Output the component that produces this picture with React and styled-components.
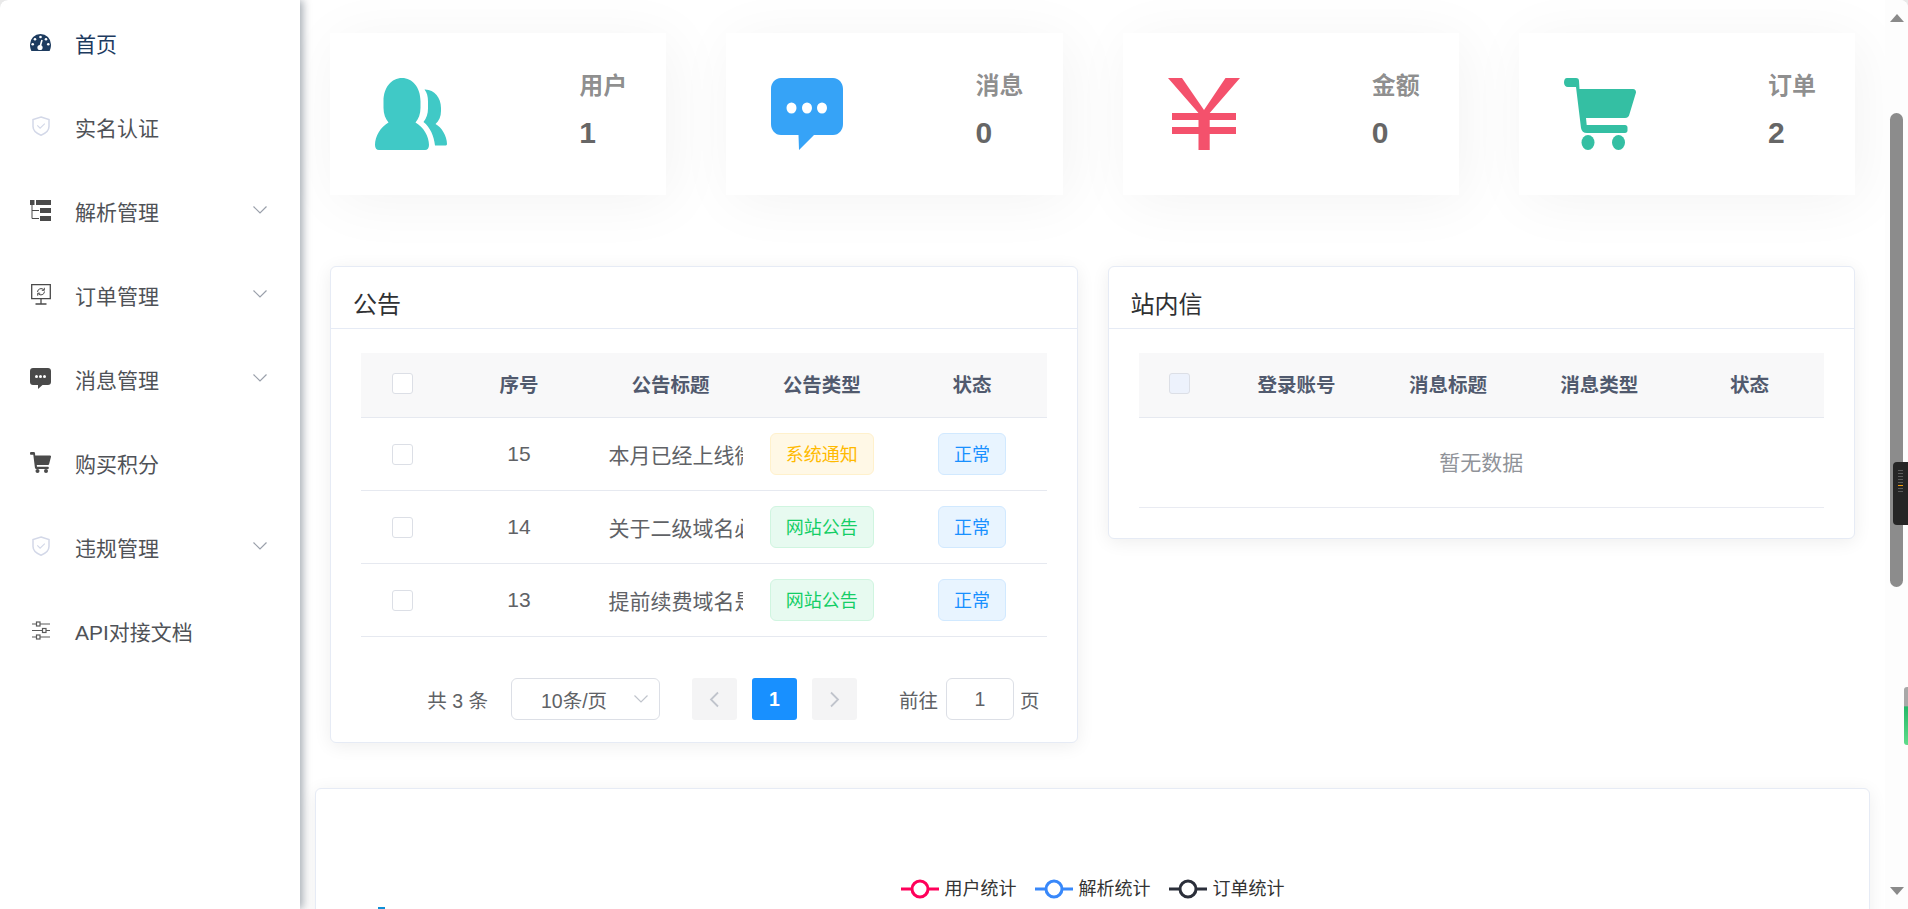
import React from "react";
import styled, { createGlobalStyle } from "styled-components";

const GlobalStyle = createGlobalStyle`
  html, body {
    margin: 0;
    height: 100%;
    overflow: hidden;
    background: #e9e9e9;
  }
  * {
    box-sizing: border-box;
  }
`;

const Shell = styled.div`
  display: flex;
  height: 909px;
  overflow: hidden;
  background: #fff;
  border-radius: 8px 8px 0 0;
  font-family: "Liberation Sans", "Noto Sans CJK SC", sans-serif;
  color: #606266;
`;

const Sidebar = styled.nav`
  position: relative;
  z-index: 2;
  flex: 0 0 300px;
  padding-top: 3px;
  background: #fff;
  border-radius: 8px 0 0 0;
  box-shadow: 3px 0 9px rgba(0, 21, 41, 0.35);
`;

const MenuRow = styled.div`
  display: flex;
  align-items: center;
  height: 84px;
  padding: 0 33px 0 30px;
  font-size: 21px;
  color: ${({ $active }) => ($active ? "#1d3b5f" : "#4f5257")};
`;

const MenuIcon = styled.span`
  display: flex;
  align-items: center;
  justify-content: center;
  width: 21px;
  height: 21px;
  margin: 0 24px 6px 0;
`;

const MenuLabel = styled.span`
  margin-bottom: 4px;
`;

const MenuChevron = styled.svg`
  width: 14px;
  height: 8px;
  margin: 0 0 7px auto;
  fill: none;
  stroke: #9aa0ab;
  stroke-width: 1.2;
`;

const SelectChevron = styled(MenuChevron)`
  margin: 0;
  stroke: #c0c4cc;
`;

const Main = styled.main`
  flex: 1;
  min-width: 0;
  height: 909px;
  overflow: hidden;
  padding: 33px 30px 0;
`;

const StatGrid = styled.div`
  display: grid;
  grid-template-columns: repeat(4, 1fr);
  gap: 60px;
`;

const StatCard = styled.div`
  display: flex;
  justify-content: space-between;
  height: 162px;
  padding: 45px 39px 0 45px;
  background: #fff;
  box-shadow: 6px 6px 60px rgba(0, 0, 0, 0.05);
`;

const StatIcon = styled.svg`
  width: 72px;
  height: 72px;
  fill: ${({ $color }) => $color};
`;

const StatText = styled.div`
  margin-top: -6px;
  font-weight: bold;
`;

const StatLabel = styled.div`
  font-size: 24px;
  line-height: 28px;
  margin-bottom: 18px;
  color: rgba(0, 0, 0, 0.45);
`;

const StatValue = styled.div`
  font-size: 30px;
  line-height: 30px;
  color: #666;
`;

const PanelGrid = styled.div`
  display: grid;
  grid-template-columns: 1fr 1fr;
  gap: 30px;
  align-items: start;
  margin-top: 71px;
`;

const Panel = styled.section`
  background: #fff;
  border: 1px solid #e6ebf5;
  border-radius: 6px;
  box-shadow: 0 3px 18px rgba(0, 0, 0, 0.07);
`;

const PanelHead = styled.h2`
  margin: 0;
  height: 62px;
  padding: 22px 22px 0;
  border-bottom: 1px solid #e6ebf5;
  font-size: 24px;
  font-weight: normal;
  line-height: 32px;
  color: #303133;
`;

const PanelBody = styled.div`
  padding: 24px 30px ${({ $bottom }) => $bottom}px;
`;

const TableRow = styled.div`
  display: grid;
  grid-template-columns: 82.5px 150.9px 152px 150.9px 1fr;
  align-items: center;
  height: ${({ $height }) => $height || 73}px;
  padding-bottom: ${({ $head }) => ($head ? 3 : 0)}px;
  background: ${({ $head }) => ($head ? "#f8f8f9" : "#fff")};
  border-bottom: 1px solid #e6e9f0;
  font-size: ${({ $head }) => ($head ? 19.5 : 21)}px;
  font-weight: ${({ $head }) => ($head ? "bold" : "normal")};
  color: ${({ $head }) => ($head ? "#515a6e" : "#606266")};
`;

const Cell = styled.div`
  display: flex;
  justify-content: center;
  align-items: center;
  min-width: 0;
`;

const ClipCell = styled.div`
  width: 135px;
  margin-left: 14px;
  overflow: hidden;
  white-space: nowrap;
`;

const Check = styled.span`
  display: block;
  width: 21px;
  height: 21px;
  background: ${({ $disabled }) => ($disabled ? "#edf2fc" : "#fff")};
  border: 1px solid #dcdfe6;
  border-radius: 3px;
`;

const tagColors = {
  yellow: { bg: "#fff8e6", line: "#fff1cc", text: "#ffba00" },
  green: { bg: "#e7faf0", line: "#d0f5e0", text: "#13ce66" },
  blue: { bg: "#e8f4ff", line: "#d1e9ff", text: "#1890ff" },
};

const Tag = styled.span`
  display: flex;
  align-items: center;
  justify-content: center;
  height: 42px;
  padding: 0 15px 3px;
  font-size: 18px;
  background: ${({ $tone }) => tagColors[$tone].bg};
  border: 1px solid ${({ $tone }) => tagColors[$tone].line};
  border-radius: 6px;
  color: ${({ $tone }) => tagColors[$tone].text};
`;

const EmptyRow = styled.div`
  display: flex;
  align-items: center;
  justify-content: center;
  height: 90px;
  padding-bottom: 3px;
  border-bottom: 1px solid #e9ebf2;
  font-size: 21px;
  color: #909399;
`;

const Pager = styled.div`
  display: flex;
  align-items: center;
  justify-content: flex-end;
  height: 42px;
  margin-top: 41px;
  padding-right: 7px;
  font-size: 19.5px;
`;

const PagerText = styled.span`
  margin: ${({ $margin }) => $margin || "0"};
`;

const PageSelect = styled.div`
  display: flex;
  align-items: center;
  justify-content: space-between;
  width: 149px;
  height: 42px;
  margin-right: 32px;
  padding: 0 11px 0 29px;
  border: 1px solid #dcdfe6;
  border-radius: 6px;
`;

const PageButton = styled.span`
  display: flex;
  align-items: center;
  justify-content: center;
  width: 45px;
  height: 42px;
  margin-right: 15px;
  background: ${({ $current }) => ($current ? "#1890ff" : "#f4f4f5")};
  border-radius: 3px;
  color: #fff;
  font-weight: bold;
`;

const PageInput = styled.div`
  display: flex;
  align-items: center;
  justify-content: center;
  width: 68px;
  height: 42px;
  border: 1px solid #dcdfe6;
  border-radius: 6px;
`;

const ChartPanel = styled.section`
  position: relative;
  margin: 45px -15px 0;
  height: 400px;
  padding-top: 82px;
  background: #fff;
  border: 1px solid #e6ebf5;
  border-radius: 6px;
  box-shadow: 0 3px 18px rgba(0, 0, 0, 0.07);
`;

const ChartMark = styled.span`
  position: absolute;
  top: 118px;
  left: 62px;
  width: 7px;
  height: 2px;
  background: #0f8fd6;
`;

const Legend = styled.div`
  display: flex;
  justify-content: center;
  gap: 18px;
  font-size: 18px;
  line-height: 36px;
  color: #333;
`;

const LegendItem = styled.span`
  display: flex;
  align-items: center;
  gap: 6px;
`;

const Scrollbar = styled.aside`
  position: relative;
  display: flex;
  flex-direction: column;
  align-items: center;
  flex: 0 0 23px;
  background: #fdfdfd;
`;

const ArrowUp = styled.span`
  width: 0;
  height: 0;
  margin-top: 14px;
  border: solid transparent;
  border-width: 0 7.5px 8px;
  border-bottom-color: #8a8a8a;
`;

const Thumb = styled.span`
  width: 13px;
  height: 474px;
  margin-top: 91px;
  background: #8c8c8c;
  border-radius: 7px;
`;

const ArrowDown = styled.span`
  width: 0;
  height: 0;
  margin-top: 300px;
  border: solid transparent;
  border-width: 8px 7.5px 0;
  border-top-color: #8a8a8a;
`;

const DarkHandle = styled.div`
  position: absolute;
  top: 462px;
  right: 0;
  display: flex;
  flex-direction: column;
  align-items: center;
  gap: 2px;
  width: 15px;
  height: 63px;
  padding-top: 8px;
  background: #262626;
  border-radius: 4px 0 0 4px;
`;

const HandleTick = styled.i`
  display: block;
  width: 5px;
  height: 1px;
  background: ${({ $accent }) => ($accent ? "#f59e0b" : "#5c5c5c")};
`;

const GreenHandle = styled.div`
  position: absolute;
  top: 687px;
  right: 0;
  width: 4px;
  height: 58px;
  background: linear-gradient(#a8a8a8 0 33%, #25b868 34%, #5fdc8b 100%);
  border-radius: 3px 0 0 3px;
`;

const Gauge = () => (
  <svg width="21" height="17" viewBox="0 0 21 17">
    <path fill="#1d3b5f" d="M10.5 0A10.5 10.5 0 0 0 0 10.5c0 2.4.5 4.6 1.4 6.5h18.2c.9-1.9 1.4-4.1 1.4-6.5A10.5 10.5 0 0 0 10.5 0z" />
    <g fill="#fff">
      <circle cx="10.5" cy="3" r="1.3" />
      <circle cx="5" cy="5.2" r="1.3" />
      <circle cx="16" cy="5.2" r="1.3" />
      <circle cx="2.7" cy="10.3" r="1.3" />
      <circle cx="18.3" cy="10.3" r="1.3" />
      <circle cx="10" cy="13.5" r="2.6" />
    </g>
    <path stroke="#fff" strokeWidth="1.6" d="M10 13l2-7" />
  </svg>
);

const Shield = () => (
  <svg width="18" height="20" viewBox="0 0 18 20" fill="none" stroke="#d3d8e8" strokeWidth="1.5">
    <path d="M9 1l8 2.6v7c0 4-3.4 6.9-8 8.6-4.600-1.700-8-4.600-8-8.600v-7z" />
    <path d="M5.300 9.300l2.800 2.900 4.700-4.600" strokeWidth="1.100" />
  </svg>
);

const TreeIcon = () => (
  <svg width="21" height="21" viewBox="0 0 21 21" fill="#4a4a4a">
    <path d="M0 0h4.500v5H0zM6 0h15v5H6zM10 8h11v5H10zM10 16h11v5H10z" />
    <path d="M2 5v13.500h7M2 10.500h7" fill="none" stroke="#4a4a4a" strokeWidth="1" />
  </svg>
);

const MonitorIcon = () => (
  <svg width="20" height="21" viewBox="0 0 20 21" fill="none" stroke="#4a4a4a" strokeWidth="1.300">
    <path d="M.7.700h18.600v14H.7zM10 14.700v5M4.500 20h11" />
    <path d="M6.500 8a3.600 3.600 0 0 1 6.300-2.200M13.500 7.500a3.600 3.600 0 0 1-6.300 2.200" strokeWidth="1" />
    <path d="M13.300 3.800v2.500h-2.500M6.700 11.700V9.200h2.500" strokeWidth="1" />
  </svg>
);

const ChatIcon = () => (
  <svg width="21" height="21" viewBox="0 0 21 21">
    <path fill="#4a4a4a" d="M3 0h15c1.800 0 3 1.200 3 3v11c0 1.800-1.200 3-3 3h-5.500L8 21v-4H3c-1.800 0-3-1.200-3-3V3c0-1.800 1.200-3 3-3z" />
    <g fill="#fff">
      <circle cx="6.500" cy="8.500" r="1.500" />
      <circle cx="10.500" cy="8.500" r="1.500" />
      <circle cx="14.500" cy="8.500" r="1.500" />
    </g>
  </svg>
);

const CartIcon = () => (
  <svg width="21" height="21" viewBox="0 0 21 21" fill="#4a4a4a">
    <path d="M1 0h2.800c.7 0 1.100.4 1.200 1l.2 2.500H20c.7 0 1.100.5 1 1.200l-1.800 7c-.2.800-.7 1.300-1.500 1.300H6.800l.2 1.700h11c.5 0 .8.300.8.800v.7c0 .5-.3.800-.8.800H6.800c-1.100 0-1.700-.6-1.900-1.600L3.300 2.800H1C.4 2.800 0 2.200 0 1.400S.4 0 1 0z" />
    <circle cx="7.500" cy="19" r="2" />
    <circle cx="16" cy="19" r="2" />
  </svg>
);

const SliderIcon = () => (
  <svg width="20" height="19" viewBox="0 0 20 19" fill="#fff" stroke="#5a5a5a" strokeWidth="1.200">
    <path d="M1 3h18M1 9.500h18M1 16h18" />
    <rect x="5.500" y="1" width="3.500" height="4" />
    <rect x="11.500" y="7.500" width="3.500" height="4" />
    <rect x="5.500" y="14" width="3.500" height="4" />
  </svg>
);

const menu = [
  { label: "首页", icon: <Gauge />, active: true },
  { label: "实名认证", icon: <Shield /> },
  { label: "解析管理", icon: <TreeIcon />, open: true },
  { label: "订单管理", icon: <MonitorIcon />, open: true },
  { label: "消息管理", icon: <ChatIcon />, open: true },
  { label: "购买积分", icon: <CartIcon /> },
  { label: "违规管理", icon: <Shield />, open: true },
  { label: "API对接文档", icon: <SliderIcon /> },
];

const stats = [
  {
    label: "用户",
    value: 1,
    color: "#40c9c6",
    path: "M27 0c10.500 0 18.500 9.500 18.500 23v7c0 6-2 11-5 14.500 8 4.500 13.500 14 13.500 22.500 0 3-1.500 5-4 5H4c-2.500 0-4-2-4-5 0-8.500 5.500-18 13.500-22.500-3-3.500-5-8.500-5-14.500v-7C8.500 9.500 16.500 0 27 0zM49.500 11.500c9.500-.5 16.500 8 16.500 18.500v3c0 5.500-2 10-5.500 13 6 3 11.500 12 11.500 20 0 1-1 1.500-2 1.500H60c-1-9.500-5-18.500-11.500-23.500 3-4 4.500-8.500 4.500-13.500v-7c0-5-1-9-3.500-12z",
  },
  {
    label: "消息",
    value: 0,
    color: "#36a3f7",
    path: "M10 0h52c6 0 10 5 10 11v35c0 6-4 11-10 11H43L28 72l-.500-15H10C4 57 0 52 0 46V11C0 5 4 0 10 0z",
    dots: true,
  },
  {
    label: "金额",
    value: 0,
    color: "#f4516c",
    path: "M0 0h14l22 32L57.500 0H72L41.700 35H68v7H41.700v7H68v7H41.700v16H30.500V56H4v-7h26.500v-7H4v-7h26.500z",
  },
  {
    label: "订单",
    value: 2,
    color: "#34bfa3",
    path: "M3 0h9c2 0 3 1 3 3l.5 8H69c2 0 3 1.500 3 3.500L65.500 36c-.5 2.500-2 4-4.500 4H22l.7 7H61c1.500 0 2.500 1 2.500 2.500v3c0 1.500-1 2.500-2.500 2.500H23c-3.500 0-5.500-2-6-5L12 9H4C1.500 9 0 7 0 4.500S1 0 3 0z",
    wheels: true,
  },
];

const notices = [
  { id: 15, title: "本月已经上线微信支付通道", type: "系统通知", tone: "yellow" },
  { id: 14, title: "关于二级域名必须实名通知", type: "网站公告", tone: "green" },
  { id: 13, title: "提前续费域名是否有优惠", type: "网站公告", tone: "green" },
];

const legend = [
  { label: "用户统计", color: "#ff005a" },
  { label: "解析统计", color: "#3888fa" },
  { label: "订单统计", color: "#2b2f3a" },
];

const Chevron = ({ dir, color = "#c0c4cc" }) => (
  <svg width="11" height="17" viewBox="0 0 11 17" fill="none" stroke={color} strokeWidth="1.800">
    <path d={dir === "left" ? "M9 1.500L2 8.500l7 7" : "M2 1.500l7 7-7 7"} />
  </svg>
);

export default function App() {
  return (
    <>
      <GlobalStyle />
      <Shell>
        <Sidebar>
          {menu.map(item => (
            <MenuRow key={item.label} $active={item.active}>
              <MenuIcon>{item.icon}</MenuIcon>
              <MenuLabel>{item.label}</MenuLabel>
              {item.open && (
                <MenuChevron viewBox="0 0 14 8">
                  <path d="M.5.500L7 7l6.500-6.500" />
                </MenuChevron>
              )}
            </MenuRow>
          ))}
        </Sidebar>
        <Main>
          <StatGrid>
            {stats.map(stat => (
              <StatCard key={stat.label}>
                <StatIcon viewBox="0 0 72 72" $color={stat.color}>
                  <path d={stat.path} />
                  {stat.dots && (
                    <g fill="#fff">
                      <ellipse cx="20.500" cy="30" rx="5" ry="5.500" />
                      <ellipse cx="36" cy="30" rx="5" ry="5.500" />
                      <ellipse cx="51" cy="30" rx="5" ry="5.500" />
                    </g>
                  )}
                  {stat.wheels && (
                    <>
                      <ellipse cx="24" cy="64.500" rx="6.500" ry="7.500" />
                      <ellipse cx="54.500" cy="64.500" rx="6.500" ry="7.500" />
                    </>
                  )}
                </StatIcon>
                <StatText>
                  <StatLabel>{stat.label}</StatLabel>
                  <StatValue>{stat.value}</StatValue>
                </StatText>
              </StatCard>
            ))}
          </StatGrid>

          <PanelGrid>
            <Panel>
              <PanelHead>公告</PanelHead>
              <PanelBody $bottom={22}>
                <TableRow $head $height={65}>
                  <Cell><Check /></Cell>
                  <Cell>序号</Cell>
                  <Cell>公告标题</Cell>
                  <Cell>公告类型</Cell>
                  <Cell>状态</Cell>
                </TableRow>
                {notices.map(row => (
                  <TableRow key={row.id}>
                    <Cell><Check /></Cell>
                    <Cell>{row.id}</Cell>
                    <ClipCell>{row.title}</ClipCell>
                    <Cell><Tag $tone={row.tone}>{row.type}</Tag></Cell>
                    <Cell><Tag $tone="blue">正常</Tag></Cell>
                  </TableRow>
                ))}
                <Pager>
                  <PagerText $margin="0 23px 0 0">共 3 条</PagerText>
                  <PageSelect>
                    10条/页
                    <SelectChevron viewBox="0 0 14 8">
                      <path d="M.5.500L7 7l6.500-6.500" />
                    </SelectChevron>
                  </PageSelect>
                  <PageButton><Chevron dir="left" /></PageButton>
                  <PageButton $current>1</PageButton>
                  <PageButton><Chevron dir="right" /></PageButton>
                  <PagerText $margin="0 8px 0 27px">前往</PagerText>
                  <PageInput>1</PageInput>
                  <PagerText $margin="0 0 0 6px">页</PagerText>
                </Pager>
              </PanelBody>
            </Panel>

            <Panel>
              <PanelHead>站内信</PanelHead>
              <PanelBody $bottom={30}>
                <TableRow $head $height={65}>
                  <Cell><Check $disabled /></Cell>
                  <Cell>登录账号</Cell>
                  <Cell>消息标题</Cell>
                  <Cell>消息类型</Cell>
                  <Cell>状态</Cell>
                </TableRow>
                <EmptyRow>暂无数据</EmptyRow>
              </PanelBody>
            </Panel>
          </PanelGrid>

          <ChartPanel>
            <ChartMark />
            <Legend>
              {legend.map(item => (
                <LegendItem key={item.label}>
                  <svg width="38" height="20" viewBox="0 0 38 20" fill="#fff" stroke={item.color} strokeWidth="3">
                    <path d="M0 10h38" />
                    <circle cx="19" cy="10" r="8" />
                  </svg>
                  {item.label}
                </LegendItem>
              ))}
            </Legend>
          </ChartPanel>
        </Main>
        <Scrollbar>
          <ArrowUp />
          <Thumb />
          <ArrowDown />
          <DarkHandle>
            {[0, 1, 2, 3, 4, 5, 6, 7].map(i => <HandleTick key={i} $accent={i === 5} />)}
          </DarkHandle>
          <GreenHandle />
        </Scrollbar>
      </Shell>
    </>
  );
}
